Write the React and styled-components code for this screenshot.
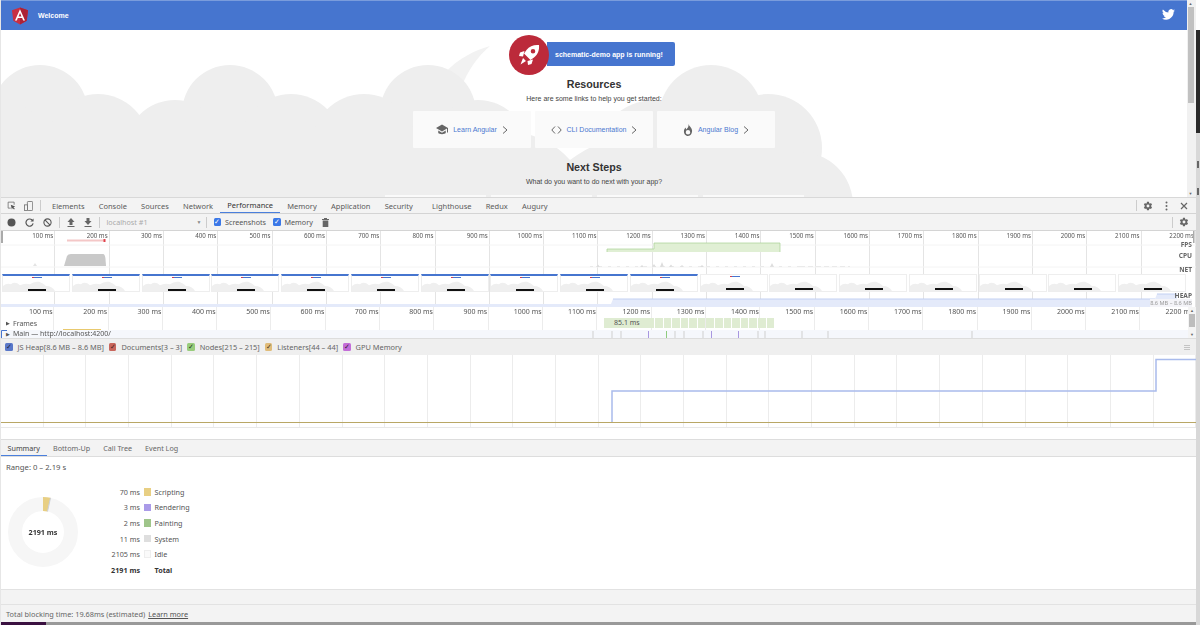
import React from 'react'
import styled, { createGlobalStyle } from 'styled-components'

const GlobalStyle = createGlobalStyle`
  * { box-sizing: border-box; }
  html, body { margin: 0; padding: 0; background: #f3f3f3; overflow: hidden; }
  body { font-family: "Noto Sans", sans-serif; }
`

const TOTAL = 22
const RANGE_A = Array.from({ length: TOTAL }, (_, i) => (i + 1) * 100)

const Screen = styled.div`
  width: 1200px;
  height: 625px;
  display: flex;
  filter: blur(0.4px);
  overflow: hidden;
`
const Main = styled.div`
  flex: 1;
  min-width: 0;
  display: flex;
  flex-direction: column;
  border-left: 1px solid #e6e6e6;
`
const EdgeStrip = styled.div`
  width: 4px;
  display: flex;
  flex-direction: column;
  background: #d8d8d8;
`
const EdgeDark = styled.div`
  height: 133px;
  background: linear-gradient(#ffffff 0, #ffffff 30px, #2a2a2a 30px);
`
const EdgeMark = styled.div`
  width: 2px;
  height: 7px;
  margin: ${p => p.$top}px 0 0 1px;
  background: #666;
`

/* app page */
const AppView = styled.div`
  height: 197px;
  display: flex;
  flex-shrink: 0;
`
const AppPage = styled.div`
  flex: 1;
  min-width: 0;
  position: relative;
  overflow: hidden;
  background: #fff;
  font-family: "Liberation Sans", Arial, sans-serif;
`
const Clouds = styled.svg`
  position: absolute;
  left: -1px;
  top: 0;
`
const TopBar = styled.div`
  position: relative;
  height: 30px;
  background: #4675cf;
  border-top: 1px solid #7a9cdc;
  display: flex;
  align-items: center;
  padding: 0 12px 0 11px;
  color: #fff;
  font-size: 7px;
  font-weight: 700;
`
const Logo = styled.svg`
  width: 16px;
  height: 18px;
  margin-right: 10px;
`
const Twitter = styled.svg`
  width: 13px;
  height: 11px;
  margin: -3px 0 0 auto;
`
const Content = styled.div`
  position: relative;
  display: flex;
  flex-direction: column;
  align-items: center;
  padding-top: 5px;
`
const Banner = styled.div`
  display: flex;
  align-items: flex-start;
  height: 41px;
  margin-right: 4px;
`
const RocketCircle = styled.div`
  width: 40px;
  height: 40px;
  border-radius: 50%;
  background: #bc2a3a;
  display: flex;
  align-items: center;
  justify-content: center;
  z-index: 1;
`
const BannerCard = styled.div`
  width: 128px;
  height: 24px;
  margin: 7px 0 0 -2px;
  padding-left: 8px;
  background: #4675cf;
  border-radius: 0 2px 2px 0;
  color: #fff;
  font-size: 7px;
  font-weight: 700;
  display: flex;
  align-items: center;
`
const Heading = styled.h2`
  margin: 1px 0 0;
  font-size: 10.7px;
  line-height: 14px;
  font-weight: 700;
  color: #333;
`
const SubText = styled.p`
  margin: 3px 0 0;
  font-size: 7px;
  line-height: 10px;
  color: #444;
`
const CardRow = styled.div`
  display: flex;
  gap: 4px;
  margin-top: 7px;
`
const LinkCard = styled.div`
  width: 118px;
  height: 37px;
  background: #fafafa;
  border-radius: 1px;
  display: flex;
  align-items: center;
  justify-content: center;
  gap: 5px;
  font-size: 7px;
  color: #4a78d0;
  svg { flex-shrink: 0; }
`
const NextHeading = styled(Heading)`
  margin-top: 12px;
`
const ActionRow = styled.div`
  display: flex;
  gap: 5px;
  margin-top: 8px;
`
const ActionCard = styled.div`
  width: 101px;
  height: 30px;
  background: #fafafa;
`
const PageScroll = styled.div`
  width: 9px;
  flex-shrink: 0;
  background: #f1f1f1;
  display: flex;
  flex-direction: column;
`
const ScrollArrow = styled.div`
  height: 7px;
  padding-right: 2px;
  display: flex;
  align-items: center;
  justify-content: center;
  font-size: 4px;
  color: #666;
`
const ScrollThumb = styled.div`
  height: 96px;
  background: #c1c1c1;
  margin: 0 2px 0 1px;
`
const ScrollSpace = styled.div`
  flex: 1;
`

/* devtools */
const DevTools = styled.div`
  flex: 1;
  display: flex;
  flex-direction: column;
  color: #555;
  font-size: 7.2px;
  min-height: 0;
`
const TabBar = styled.div`
  height: 17px;
  flex-shrink: 0;
  background: #f3f3f3;
  border-top: 1px solid #d8d8d8;
  border-bottom: 1px solid #d4d4d4;
  display: flex;
  align-items: center;
  padding-left: 6px;
  font-size: 7.5px;
  color: #5a5a5a;
`
const IconGroup = styled.div`
  display: flex;
  align-items: center;
  gap: 8px;
  padding-right: 7px;
  margin-right: 3.9px;
  border-right: 1px solid #ccc;
  height: 11px;
`
const Tab = styled.div`
  height: 100%;
  display: flex;
  align-items: center;
  padding: 0 7.1px;
  margin-right: ${p => p.$gap || 0}px;
  color: ${p => (p.$active ? '#333' : '#5a5a5a')};
  border-bottom: ${p => (p.$active ? '1px solid #4a7fdc' : 'none')};
`
const TabIcons = styled.div`
  margin-left: auto;
  display: flex;
  align-items: center;
  gap: 12px;
  padding-right: 8px;
  height: 100%;
`
const Divider = styled.div`
  width: 1px;
  height: 11px;
  background: #ccc;
  margin-right: -6px;
`
const Toolbar = styled.div`
  height: 17px;
  flex-shrink: 0;
  background: #f3f3f3;
  border-bottom: 1px solid #d4d4d4;
  display: flex;
  align-items: center;
  padding-left: 5.5px;
  gap: 7px;
`
const ToolGroup = styled.div`
  display: flex;
  align-items: center;
  gap: ${p => p.$gap}px;
`
const TargetSelect = styled.div`
  width: 92px;
  display: flex;
  justify-content: space-between;
  align-items: center;
  color: #aaa;
  font-size: 7.2px;
`
const SelectCaret = styled.span`
  font-size: 5px;
  color: #888;
  margin-right: -3px;
`
const ToolSep = styled.div`
  width: 1px;
  height: 11px;
  background: #ccc;
`
const Check = styled.span`
  width: 7.5px;
  height: 7.5px;
  border-radius: 1.5px;
  background: ${p => p.$color};
  display: inline-flex;
  align-items: center;
  justify-content: center;
  color: ${p => p.$tick || '#fff'};
  font-size: 6.5px;
  line-height: 1;
  flex-shrink: 0;
`
const CheckLabel = styled.label`
  display: flex;
  align-items: center;
  gap: 4px;
  color: #555;
`
const TrashIcon = styled.svg`
  margin-left: 2px;
`
const ToolEnd = styled.div`
  margin-left: auto;
  display: flex;
  align-items: center;
  gap: 6px;
  padding-right: 7px;
`

const Overview = styled.div`
  height: 76px;
  flex-shrink: 0;
  background: #fff;
  position: relative;
  overflow: hidden;
  display: flex;
  flex-direction: column;
`
const Grid = styled.div`
  display: flex;
  height: ${p => p.$height}px;
  margin-left: ${p => p.$offset || 0}px;
  flex-shrink: 0;
`
const FlameGrid = styled(Grid)`
  position: absolute;
  left: 0;
  top: 0;
`
const Cell = styled.div`
  width: 54.32px;
  flex-shrink: 0;
  text-align: right;
  border-right: 1px solid ${p => p.$line || '#e4e4e4'};
  padding: ${p => p.$pad || '1px 1px 0 0'};
  font-size: ${p => p.$size || 6.2}px;
  line-height: 8px;
  color: #555;
  white-space: nowrap;
`
const OverviewChart = styled.svg`
  position: absolute;
  left: -1px;
  top: 0;
`
const TrackLabel = styled.div`
  position: absolute;
  right: 4px;
  top: ${p => p.$top}px;
  font-size: 6.6px;
  font-weight: 700;
  color: #666;
  line-height: 8px;
`
const HeapRange = styled.div`
  position: absolute;
  right: 4px;
  top: 68px;
  font-size: 5.6px;
  color: #999;
  line-height: 8px;
  background: #f4f4f8;
`
const Shots = styled.div`
  position: absolute;
  left: 1px;
  top: 43px;
  display: flex;
  gap: 1.75px;
`
const Shot = styled.div`
  width: 68px;
  height: 18px;
  position: relative;
  overflow: hidden;
  background: #fff;
  border: 1px solid #eee;
  border-top: ${p => (p.$bar ? '2px solid #4675cf' : '1px solid #eee')};
  flex-shrink: 0;
`
const ShotCloud = styled.svg`
  position: absolute;
  left: 0;
  bottom: 0;
`
const ShotBlack = styled.div`
  position: absolute;
  left: 25px;
  top: 12.5px;
  width: 18px;
  height: 2px;
  background: #111;
`
const ShotBlue = styled.div`
  position: absolute;
  left: 29px;
  top: 0.5px;
  width: 10px;
  height: 1px;
  background: #4675cf;
  border-left: 2px solid #d23c50;
`

const Flame = styled.div`
  height: 31px;
  flex-shrink: 0;
  background: #fff;
  position: relative;
  overflow: hidden;
  display: flex;
  flex-direction: column;
`
const FlameRow = styled.div`
  height: ${p => p.$height}px;
  display: flex;
  align-items: ${p => p.$align || 'center'};
  color: #555;
  font-size: 7px;
  padding-left: 5px;
  gap: 3px;
  background: ${p => p.$bg || 'transparent'};
  position: relative;
`
const Caret = styled.span`
  font-size: 5px;
  color: #555;
  line-height: 8px;
`
const MainUrl = styled.span`
  position: relative;
  line-height: 8px;
  white-space: nowrap;
  &::before {
    content: '';
    position: absolute;
    left: 50px;
    width: 38px;
    top: -1px;
    height: 1px;
    background: #e8c96e;
  }
`
const FlameOverlay = styled.svg`
  position: absolute;
  left: -1px;
  top: 0;
`
const FrameBox = styled.div`
  position: absolute;
  left: 603px;
  top: 11px;
  width: 170px;
  height: 10px;
  display: flex;
  gap: 1px;
  color: #555;
  font-size: 7px;
  line-height: 10px;
`
const FrameLabel = styled.div`
  width: 50px;
  padding-left: 10px;
  background: #dfecd2;
  flex-shrink: 0;
`
const FrameCell = styled.div`
  flex: 1;
  background: #dfecd2;
`
const FlameScroll = styled.div`
  position: absolute;
  right: 0;
  top: 0;
  width: 8px;
  height: 100%;
  background: #f4f4f4;
  display: flex;
  flex-direction: column;
  align-items: center;
`
const FlameArrow = styled.div`
  height: 7px;
  font-size: 4px;
  line-height: 7px;
  color: #666;
`
const FlameThumb = styled.div`
  width: 6px;
  height: 13px;
  background: #bdbdbd;
  margin-bottom: 4px;
`

const Legend = styled.div`
  height: 17px;
  flex-shrink: 0;
  background: #efefef;
  display: flex;
  align-items: center;
  padding-left: 4px;
  gap: 5px;
  border-top: 1px solid #ddd;
  font-size: 7.4px;
  color: #666;
`
const LegendItem = styled.div`
  display: flex;
  align-items: center;
  gap: 5px;
`
const LegendMenu = styled.div`
  margin-left: auto;
  margin-right: 6px;
  width: 6px;
  height: 5px;
  border-top: 1px solid #c4c4c4;
  border-bottom: 1px solid #c4c4c4;
  position: relative;
  &::after {
    content: '';
    position: absolute;
    left: 0;
    right: 0;
    top: 1px;
    height: 1px;
    background: #c4c4c4;
  }
`
const MemoryGraph = styled.div`
  height: 72px;
  flex-shrink: 0;
  background: #fff;
  position: relative;
  overflow: hidden;
`
const MemoryCols = styled.div`
  display: flex;
  height: 100%;
`
const MemoryCol = styled.div`
  width: 42.7px;
  flex-shrink: 0;
  border-right: 1px solid #ececec;
`
const MemoryLines = styled.svg`
  position: absolute;
  left: -1px;
  top: 0;
`
const Gap = styled.div`
  height: 12px;
  flex-shrink: 0;
  background: #fff;
  border-top: 1px solid #e8e8e8;
`

const SubTabs = styled.div`
  height: 18px;
  flex-shrink: 0;
  background: #f3f3f3;
  border-top: 1px solid #ddd;
  border-bottom: 1px solid #ddd;
  display: flex;
  color: #666;
`
const SubTab = styled.div`
  display: flex;
  align-items: center;
  padding: 0 6.5px;
  height: 100%;
  color: ${p => (p.$active ? '#444' : '#666')};
  border-bottom: ${p => (p.$active ? '1px solid #4a7fdc' : 'none')};
`
const Summary = styled.div`
  height: 132px;
  flex-shrink: 0;
  background: #fff;
  padding: 5px 5px 0;
  color: #555;
`
const RangeLine = styled.div`
  line-height: 10px;
  font-size: 7.7px;
`
const SummaryBody = styled.div`
  display: flex;
  margin-top: 12px;
`
const DonutWrap = styled.div`
  width: 70px;
  height: 70px;
  margin: 13px 0 0 2px;
  position: relative;
  flex-shrink: 0;
`
const DonutValue = styled.div`
  position: absolute;
  inset: 0;
  display: flex;
  align-items: center;
  justify-content: center;
  font-size: 7.2px;
  font-weight: 700;
  color: #333;
`
const StatsTable = styled.div`
  display: grid;
  grid-template-columns: 62px 7.5px auto;
  grid-auto-rows: 15.6px;
  align-items: center;
  column-gap: 3.5px;
`
const StatValue = styled.div`
  text-align: right;
  font-weight: ${p => (p.$bold ? 700 : 400)};
  color: ${p => (p.$bold ? '#333' : '#555')};
`
const Swatch = styled.div`
  width: 7.5px;
  height: 7.5px;
  background: ${p => p.$color || 'transparent'};
  border: ${p => (p.$outline ? '1px solid #eee' : 'none')};
`
const StatName = styled.div`
  font-weight: ${p => (p.$bold ? 700 : 400)};
  color: ${p => (p.$bold ? '#333' : '#555')};
`
const GrayBand = styled.div`
  height: 16px;
  flex-shrink: 0;
  background: #f3f3f3;
  border-top: 1px solid #e2e2e2;
  border-bottom: 1px solid #e2e2e2;
`
const Footer = styled.div`
  height: 17px;
  flex-shrink: 0;
  background: #f3f3f3;
  display: flex;
  align-items: center;
  padding-left: 5px;
  gap: 3px;
  font-size: 7.35px;
  color: #666;
`
const LearnMore = styled.a`
  color: #555;
  text-decoration: underline;
`
const BottomEdge = styled.div`
  height: 3px;
  flex-shrink: 0;
  background: #999;
  &::before {
    content: '';
    display: block;
    width: 45px;
    height: 3px;
    background: #3a1040;
  }
`

const Gear = ({ size = 10 }) => (
  <svg width={size} height={size} viewBox="0 0 24 24" fill="#666">
    <path d="M19.4 13c.1-.3.1-.7.1-1s0-.7-.1-1l2.1-1.6c.2-.2.2-.4.1-.6l-2-3.5c-.1-.2-.4-.3-.6-.2l-2.5 1c-.5-.4-1.1-.7-1.7-1l-.4-2.6c0-.3-.2-.5-.5-.5h-4c-.3 0-.5.2-.5.4l-.4 2.700c-.6.2-1.2.6-1.7 1l-2.5-1c-.2-.1-.5 0-.6.2l-2 3.5c-.1.2-.1.4.1.6L4.4 11c-.1.3-.1.7-.1 1s0 .7.1 1l-2.100 1.600c-.2.2-.2.4-.1.6l2 3.500c.1.2.4.3.6.2l2.500-1c.5.4 1.100.7 1.700 1l.4 2.600c0 .3.2.5.5.5h4c.3 0 .5-.2.5-.4l.4-2.700c.6-.2 1.200-.6 1.700-1l2.500 1c.2.1.5 0 .6-.2l2-3.500c.1-.2.1-.4-.1-.6L19.400 13zM12 15.500a3.500 3.500 0 1 1 0-7 3.500 3.500 0 0 1 0 7z" />
  </svg>
)

const Chevron = () => (
  <svg width="6" height="8" viewBox="0 0 6 8" fill="none" stroke="#666" strokeWidth="1"><path d="M1 .5 5 4 1 7.500" /></svg>
)

const CloudShape = () => (
  <Clouds width="1188" height="197" viewBox="0 0 1188 197">
    <path d="M445 73 C458 58 476 50 490 46 C478 56 468 70 461 88 Z" fill="#f2f2f2" />
    <g fill="#eeeeee">
      <circle cx="40" cy="113" r="48" />
      <circle cx="98" cy="145" r="51" />
      <circle cx="0" cy="150" r="50" />
      <circle cx="230" cy="113" r="48" />
      <circle cx="175" cy="150" r="50" />
      <circle cx="291" cy="145" r="51" />
      <circle cx="428" cy="113" r="48" />
      <circle cx="364" cy="146" r="52" />
      <circle cx="478" cy="150" r="50" />
      <circle cx="655" cy="160" r="60" />
      <circle cx="711" cy="117" r="52" />
      <circle cx="768" cy="148" r="54" />
      <circle cx="800" cy="205" r="53" />
      <path d="M0 197V130H500Q545 132 570 160Q600 138 640 130H800V197Z" />
    </g>
  </Clouds>
)

export default function App() {
  const shots = Array.from({ length: 17 }, (_, i) => i)
  const memoryCols = Array.from({ length: 28 }, (_, i) => i)
  const frameCells = Array.from({ length: 14 }, (_, i) => i)
  return (
    <Screen>
      <GlobalStyle />
      <Main>
        <AppView>
          <AppPage>
            <CloudShape />
            <TopBar>
              <Logo viewBox="18 10 214 230">
                <path fill="#c92f42" d="M125 10 18 48l17 140 90 52 90-52 17-140z" />
                <path fill="#ad2236" d="M125 10v230l90-52 17-140z" />
                <path fill="#fff" d="M125 36 58 186h25l13-33h58l13 33h25zm20 97h-40l20-48z" />
              </Logo>
              Welcome
              <Twitter viewBox="0 0 24 20">
                <path fill="#fff" d="M24 2.400a10 10 0 0 1-2.800.8 5 5 0 0 0 2.200-2.700 10 10 0 0 1-3.100 1.200 4.900 4.900 0 0 0-8.400 4.500A14 14 0 0 1 1.700.9a4.900 4.900 0 0 0 1.500 6.600 4.900 4.900 0 0 1-2.200-.6v.1a4.900 4.900 0 0 0 3.900 4.800 5 5 0 0 1-2.200.1 4.900 4.900 0 0 0 4.600 3.400A9.900 9.900 0 0 1 0 17.300 14 14 0 0 0 7.500 19.500c9.100 0 14-7.500 14-14v-.6A10 10 0 0 0 24 2.400z" />
              </Twitter>
            </TopBar>
            <Content>
              <Banner>
                <RocketCircle>
                  <svg width="24" height="24" viewBox="0 0 24 24">
                    <path fill="#fff" d="M22 2c-5-.5-9.500 1-12.500 5L7 10.500l6.500 6.500 3.500-2.500c4-3 5.500-7.500 5-12.500zm-6 8.500a2.300 2.300 0 1 1 0-4.600 2.300 2.300 0 0 1 0 4.600zM7.500 8 3 9.500 2 13l4 .5zM16 16.500l-1.500 4.500-3.500 1-.5-4zM6 15l3 3-5.500 3.500z" />
                  </svg>
                </RocketCircle>
                <BannerCard>schematic-demo app is running!</BannerCard>
              </Banner>
              <Heading>Resources</Heading>
              <SubText>Here are some links to help you get started:</SubText>
              <CardRow>
                <LinkCard>
                  <svg width="12" height="11" viewBox="0 0 24 22" fill="#666">
                    <path d="M12 1 0 8l12 7 10-5.800V17h2V8zM4.500 13v5c2 3 13 3 15 0v-5L12 17.500z" />
                  </svg>
                  Learn Angular
                  <Chevron />
                </LinkCard>
                <LinkCard>
                  <svg width="11" height="8" viewBox="0 0 11 8" fill="none" stroke="#666" strokeWidth="1"><path d="M4 .5.800 4 4 7.500M7 .5 10.200 4 7 7.500" /></svg>
                  CLI Documentation
                  <Chevron />
                </LinkCard>
                <LinkCard>
                  <svg width="10" height="12" viewBox="0 0 20 24" fill="#666">
                    <path d="M11 0c1 4 6 7 7 12 1 6-3 12-8 12S1 19 2 13c.5-3 2-4 3-6 1 2 1 3 2 4 2-3 5-6 4-11zm-1 12a4.500 4.500 0 1 0 0 9 4.500 4.500 0 0 0 0-9z" />
                  </svg>
                  Angular Blog
                  <Chevron />
                </LinkCard>
              </CardRow>
              <NextHeading>Next Steps</NextHeading>
              <SubText>What do you want to do next with your app?</SubText>
              <ActionRow>
                <ActionCard />
                <ActionCard />
                <ActionCard />
                <ActionCard />
              </ActionRow>
            </Content>
          </AppPage>
          <PageScroll>
            <ScrollArrow>▲</ScrollArrow>
            <ScrollThumb />
            <ScrollSpace />
            <ScrollArrow>▼</ScrollArrow>
          </PageScroll>
        </AppView>

        <DevTools>
          <TabBar>
            <IconGroup>
              <svg width="9" height="9" viewBox="0 0 12 12" fill="none" stroke="#666" strokeWidth="1"><path d="M5 9.500H1.500v-8h8V5" /><path fill="#555" stroke="none" d="M5 5l6 2.300-2.400 1 1.800 2-1 1-1.900-2.100-1 2.200z" /></svg>
              <svg width="9" height="10" viewBox="0 0 12 13" fill="none" stroke="#666" strokeWidth="1"><rect x="4.500" y=".5" width="7" height="12" rx="1" /><rect x=".5" y="5" width="4" height="7.500" fill="#f3f3f3" /></svg>
            </IconGroup>
            <Tab>Elements</Tab>
            <Tab>Console</Tab>
            <Tab>Sources</Tab>
            <Tab>Network</Tab>
            <Tab $active>Performance</Tab>
            <Tab>Memory</Tab>
            <Tab>Application</Tab>
            <Tab $gap={5}>Security</Tab>
            <Tab>Lighthouse</Tab>
            <Tab>Redux</Tab>
            <Tab>Augury</Tab>
            <TabIcons>
              <Divider />
              <Gear />
              <svg width="3" height="10" viewBox="0 0 3 10" fill="#666"><circle cx="1.500" cy="1.500" r="1" /><circle cx="1.500" cy="5" r="1" /><circle cx="1.500" cy="8.500" r="1" /></svg>
              <svg width="8" height="8" viewBox="0 0 8 8" stroke="#666" strokeWidth="1.200"><path d="M1 1l6 6M7 1 1 7" /></svg>
            </TabIcons>
          </TabBar>

          <Toolbar>
            <ToolGroup $gap={9}>
              <svg width="9" height="9" viewBox="0 0 9 9"><circle cx="4.500" cy="4.500" r="4" fill="#555" /></svg>
              <svg width="9" height="9" viewBox="0 0 10 10" fill="none" stroke="#555" strokeWidth="1.300"><path d="M8.500 3A4 4 0 1 0 9 6" /><path fill="#555" stroke="none" d="M9.500.5v3.500H6z" /></svg>
              <svg width="9" height="9" viewBox="0 0 10 10" fill="none" stroke="#555" strokeWidth="1.200"><circle cx="5" cy="5" r="4" /><path d="M2.200 2.200l5.600 5.600" /></svg>
            </ToolGroup>
            <ToolSep />
            <ToolGroup $gap={9}>
              <svg width="8" height="9" viewBox="0 0 8 9" fill="#666"><path d="M4 0 7.500 4H5.500v3h-3V4H.5zM.5 8h7v1h-7z" /></svg>
              <svg width="8" height="9" viewBox="0 0 8 9" fill="#666"><path d="M4 7 .5 3h2V0h3v3h2zM.5 8h7v1h-7z" /></svg>
            </ToolGroup>
            <ToolSep />
            <TargetSelect>
              localhost #1
              <SelectCaret>▼</SelectCaret>
            </TargetSelect>
            <ToolSep />
            <CheckLabel><Check $color="#3b78e7">✓</Check>Screenshots</CheckLabel>
            <CheckLabel><Check $color="#3b78e7">✓</Check>Memory</CheckLabel>
            <TrashIcon width="7" height="9" viewBox="0 0 7 9" fill="#666"><path d="M0 1h2V0h3v1h2v1H0zM.7 2.500h5.600V9H.7z" /></TrashIcon>
            <ToolEnd>
              <ToolSep />
              <Gear />
            </ToolEnd>
          </Toolbar>

          <Overview>
            <Grid $height={76}>
              {RANGE_A.map(v => <Cell key={v}>{v} ms</Cell>)}
            </Grid>
            <OverviewChart width="1197" height="76" viewBox="0 0 1197 76">
              <path d="M0 14h1197M0 36h1197" stroke="#f4f4f4" strokeWidth="1" />
              <path d="M1 0h2v12H1zM1193 0h1.500v12H1193z" fill="#aaa" />
              <path d="M67 8.500h38v2H67z" fill="#f4c7c7" />
              <path d="M103.500 8h2v3h-2z" fill="#e0404a" />
              <path d="M64 35 67 25Q68 23 71 23H103Q105 23 105.500 28L106 35Z" fill="#c9c9c9" />
              <path d="M33 35l2-3 2 3z" fill="#e4e4e4" />
              <path d="M596 36l2-2.500 2 2.500zM640 36l2-2 2 2zM652 36l2-3 2 3zM660 36l2-5 2 5zM669 36l2-2.500 2 2.500zM680 36l2-2 2 2zM700 36l2-2 2 2zM770 36l2-4 2 4z" fill="#ddd" />
              <path d="M590 35.500H800" stroke="#e2e2e2" strokeWidth="0.700" strokeDasharray="3 6" />
              <path d="M800 35.500H850" stroke="#e2e2e2" strokeWidth="0.700" strokeDasharray="5 3" />
              <path d="M607 21V18H654V12H780V21Z" fill="#e0efd4" />
              <path d="M607 21V18H654V12H780V21" fill="none" stroke="#a8d192" strokeWidth="0.700" />
              <path d="M0 73H611L613 68H1155L1157 63H1177V76H0Z" fill="#e4eafa" />
              <path d="M613 68H1155M1157 63H1177" fill="none" stroke="#c2d0f2" strokeWidth="1" />
            </OverviewChart>
            <Shots>
              {shots.map(i => (
                <Shot key={i} $bar={i < 10}>
                  <ShotCloud width="66" height="10" viewBox="0 0 66 12" preserveAspectRatio="none">
                    <path d="M0 12V6Q4 2 8 4Q12 0 17 5Q22 2 27 4Q31 0 36 1Q41 3 43 6Q49 6 52 12Z" fill="#efefef" />
                  </ShotCloud>
                  {i < 11 && <ShotBlue />}
                  <ShotBlack />
                </Shot>
              ))}
            </Shots>
            <TrackLabel $top={10}>FPS</TrackLabel>
            <TrackLabel $top={21}>CPU</TrackLabel>
            <TrackLabel $top={35}>NET</TrackLabel>
            <TrackLabel $top={61}>HEAP</TrackLabel>
            <HeapRange>8.6 MB – 8.6 MB</HeapRange>
          </Overview>

          <Flame>
            <FlameGrid $height={31} $offset={-1.1}>
              {RANGE_A.map(v => <Cell key={v} $line="#ececec" $size={7} $pad="1px .5px 0 0">{v} ms</Cell>)}
            </FlameGrid>
            <FlameRow $height={9} />
            <FlameRow $height={14}><Caret>▶</Caret>Frames</FlameRow>
            <FlameRow $height={8} $bg="#f5f7fc" $align="flex-start"><Caret>▶</Caret><MainUrl>Main — http://localhost:4200/</MainUrl></FlameRow>
            <FrameBox>
              <FrameLabel>85.1 ms</FrameLabel>
              {frameCells.map(i => <FrameCell key={i} />)}
            </FrameBox>
            <FlameOverlay width="1197" height="31" viewBox="0 0 1197 31">
              <path d="M1.500 31V23.500H7" stroke="#4675cf" fill="none" />
              <path d="M593 24v7M612 24v7M621 24v7M675 24v7M684 24v7M703 24v7M758 24v7M765 24v7M802 24v7M828 24v7M972 24v7" stroke="#cfcfcf" />
              <path d="M648.500 24v7M711.500 24v7M738.500 24v7" stroke="#a897e0" />
              <path d="M666.500 24v7" stroke="#8ecb7d" />
            </FlameOverlay>
            <FlameScroll>
              <FlameArrow>▲</FlameArrow>
              <FlameThumb />
              <FlameArrow>▼</FlameArrow>
            </FlameScroll>
          </Flame>

          <Legend>
            <LegendItem><Check $color="#5a78c9" $tick="#223">✓</Check>JS Heap[8.6 MB – 8.6 MB]</LegendItem>
            <LegendItem><Check $color="#c8665c" $tick="#422">✓</Check>Documents[3 – 3]</LegendItem>
            <LegendItem><Check $color="#98cc7c" $tick="#232">✓</Check>Nodes[215 – 215]</LegendItem>
            <LegendItem><Check $color="#e0bc7a" $tick="#432">✓</Check>Listeners[44 – 44]</LegendItem>
            <LegendItem><Check $color="#c36dd8" $tick="#323">✓</Check>GPU Memory</LegendItem>
            <LegendMenu />
          </Legend>

          <MemoryGraph>
            <MemoryCols>
              {memoryCols.map(i => <MemoryCol key={i} />)}
            </MemoryCols>
            <MemoryLines width="1197" height="72" viewBox="0 0 1197 72">
              <path d="M0 67.500H1197" stroke="#b9a765" strokeWidth="1" />
              <path d="M612 67V36H1156V4.500H1197" fill="none" stroke="#a9bbec" strokeWidth="1.500" />
            </MemoryLines>
          </MemoryGraph>
          <Gap />

          <SubTabs>
            <SubTab $active>Summary</SubTab>
            <SubTab>Bottom-Up</SubTab>
            <SubTab>Call Tree</SubTab>
            <SubTab>Event Log</SubTab>
          </SubTabs>

          <Summary>
            <RangeLine>Range: 0 – 2.19 s</RangeLine>
            <SummaryBody>
              <DonutWrap>
                <svg width="70" height="70" viewBox="0 0 70 70">
                  <circle cx="35" cy="35" r="28" fill="none" stroke="#f6f6f6" strokeWidth="14" />
                  <path d="M35 0 A35 35 0 0 1 42.500 .8 L39.500 14.500 A21 21 0 0 0 35 14 Z" fill="#e8cf83" />
                  <path d="M42 .7 L43 .9 L40 14.600 L39 14.400Z" fill="#ccd0d8" />
                </svg>
                <DonutValue>2191 ms</DonutValue>
              </DonutWrap>
              <StatsTable>
                <StatValue>70 ms</StatValue><Swatch $color="#e8cf83" /><StatName>Scripting</StatName>
                <StatValue>3 ms</StatValue><Swatch $color="#aa9be8" /><StatName>Rendering</StatName>
                <StatValue>2 ms</StatValue><Swatch $color="#9fc58a" /><StatName>Painting</StatName>
                <StatValue>11 ms</StatValue><Swatch $color="#dedede" /><StatName>System</StatName>
                <StatValue>2105 ms</StatValue><Swatch $outline $color="#fafafa" /><StatName>Idle</StatName>
                <StatValue $bold>2191 ms</StatValue><Swatch /><StatName $bold>Total</StatName>
              </StatsTable>
            </SummaryBody>
          </Summary>

          <GrayBand />
          <Footer>
            Total blocking time: 19.68ms (estimated)
            <LearnMore>Learn more</LearnMore>
          </Footer>
          <BottomEdge />
        </DevTools>
      </Main>
      <EdgeStrip>
        <EdgeDark />
        <EdgeMark $top={28} />
        <EdgeMark $top={20} />
      </EdgeStrip>
    </Screen>
  )
}
